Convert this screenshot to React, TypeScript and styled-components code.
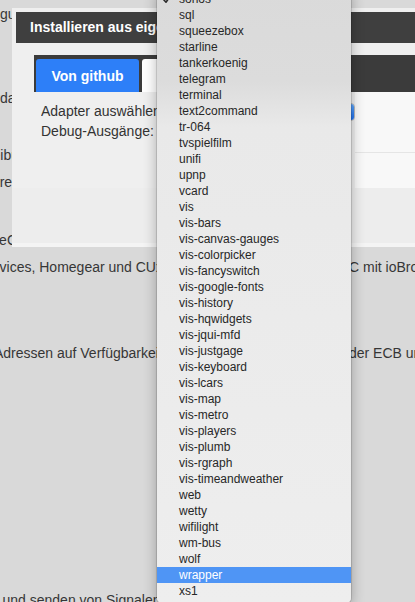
import React from 'react'
import styled, { createGlobalStyle } from 'styled-components'

const GlobalStyle = createGlobalStyle`
  html, body {
    margin: 0;
    padding: 0;
    background: #d9d9d9;
  }
  body {
    font-family: "Liberation Sans", Arial, Helvetica, sans-serif;
  }
`

const Page = styled.div`
  position: relative;
  width: 415px;
  height: 602px;
  overflow: hidden;
  background: #d9d9d9;
  color: #363636;
  font-size: 14px;
`

const Line = styled.div<{ $gap: number }>`
  display: grid;
  grid-template-columns: 157px 194px 1fr;
  height: 16px;
  line-height: 16px;
  margin-top: ${p => p.$gap}px;
  white-space: nowrap;
`

const Cell = styled.div`
  overflow: hidden;
`

const Shifted = styled.span<{ $shift: number }>`
  display: inline-block;
  margin-left: -${p => p.$shift}px;
`

const Dialog = styled.div`
  position: absolute;
  left: 12px;
  top: 8px;
  width: 420px;
  height: 239px;
  background: #efefef;
  display: flex;
  flex-direction: column;
`

const TitleBar = styled.div`
  margin: 4px 0 0 4px;
  height: 31px;
  line-height: 31px;
  padding-left: 14px;
  background: #3f3f3f;
  color: #fff;
  font-size: 14px;
  font-weight: bold;
  white-space: nowrap;
`

const Body = styled.div`
  padding: 12px 0 0 22px;
`

const TabBar = styled.div`
  display: flex;
  align-items: flex-end;
  gap: 3px;
  height: 37px;
  padding-left: 2px;
  background: #3b3b3b;
`

const Tab = styled.div<{ $active?: boolean; $width: number }>`
  width: ${p => p.$width}px;
  height: 31px;
  padding-top: 2px;
  line-height: 31px;
  border-radius: 3px 3px 0 0;
  background: ${p => (p.$active ? '#2d7ff8' : '#ffffff')};
  color: ${p => (p.$active ? '#ffffff' : '#333333')};
  font-size: 14px;
  font-weight: bold;
  text-align: center;
  white-space: nowrap;
`

const TabPanel = styled.div`
  display: flex;
  height: 96px;
`

const Form = styled.div`
  display: grid;
  grid-template-columns: 116px 198px;
  grid-auto-rows: 20px;
  padding: 9px 0 0 7px;
  color: #333;
  font-size: 14px;
`

const Label = styled.div`
  line-height: 20px;
  white-space: nowrap;
  overflow: hidden;
`

const Select = styled.div`
  position: relative;
  height: 16px;
  margin-top: 2px;
  border: 1px solid #b9b9b9;
  border-radius: 4px;
  background: #fff;
  overflow: hidden;
`

const SelectArrow = styled.div`
  position: absolute;
  right: 0;
  top: 0;
  bottom: 0;
  width: 16px;
  background: linear-gradient(#5ea6fb, #1c6ff0);
`

const Checkbox = styled.div`
  width: 12px;
  height: 12px;
  margin-top: 4px;
  border: 1px solid #aaa;
  border-radius: 3px;
  background: #fff;
`

const Aside = styled.div`
  flex: 1;
  display: flex;
  flex-direction: column;
  background: #f8f8f8;
`

const AsideBlock = styled.div<{ $divided?: boolean }>`
  height: ${p => (p.$divided ? 35 : 60)}px;
  border-top: ${p => (p.$divided ? '1px solid #e5e5e5' : 'none')};
`

const Footer = styled.div`
  flex: 1;
  background: #ededed;
  border-bottom: 4px solid #f4f4f4;
`

const Menu = styled.ul`
  position: absolute;
  left: 157px;
  top: -13px;
  width: 194px;
  margin: 0;
  padding: 4px 0;
  list-style: none;
  border-radius: 5px;
  background: linear-gradient(
    #dadada 0px,
    #dcdcdc 95px,
    #e9e9e9 140px,
    #eeeeee 100%
  );
  box-shadow: 0 0 0 1px rgba(0, 0, 0, 0.12), 0 4px 14px rgba(0, 0, 0, 0.3);
  font-size: 12px;
`

const Item = styled.li<{ $selected?: boolean }>`
  position: relative;
  height: 16px;
  line-height: 16px;
  padding-left: 22px;
  background: ${p => (p.$selected ? '#4f95f5' : 'transparent')};
  color: ${p => (p.$selected ? '#ffffff' : '#272727')};
  white-space: nowrap;
`

const Check = styled.svg`
  position: absolute;
  left: 5px;
  top: 3px;
  width: 10px;
  height: 10px;
`

const lines = [
  { gap: 6, left: 'Konfiguration', ls: 32 },
  { gap: 68, left: 'Wetterdaten', ls: 41 },
  { gap: 41, left: 'Beschreibung', ls: 51 },
  { gap: 11, left: 'Sensoren', ls: 40 },
  { gap: 42, left: 'ReGaHSS', ls: 11 },
  {
    gap: 11,
    left: 'BidCos-Services, Homegear und CUxD',
    ls: 72,
    right: 'C mit ioBroker',
    rs: 2,
  },
  {
    gap: 70,
    left: 'IP-Adressen auf Verfügbarkeit',
    ls: 24,
    right: 'der ECB und',
    rs: 2,
  },
  { gap: 231, left: 'Empfangen und senden von Signalen', ls: 73 },
]

const adapters = [
  'sonos', 'sql', 'squeezebox', 'starline', 'tankerkoenig', 'telegram',
  'terminal', 'text2command', 'tr-064', 'tvspielfilm', 'unifi', 'upnp',
  'vcard', 'vis', 'vis-bars', 'vis-canvas-gauges', 'vis-colorpicker',
  'vis-fancyswitch', 'vis-google-fonts', 'vis-history', 'vis-hqwidgets',
  'vis-jqui-mfd', 'vis-justgage', 'vis-keyboard', 'vis-lcars', 'vis-map',
  'vis-metro', 'vis-players', 'vis-plumb', 'vis-rgraph',
  'vis-timeandweather', 'web', 'wetty', 'wifilight', 'wm-bus', 'wolf',
  'wrapper', 'xs1',
]

export default function App() {
  return (
    <Page>
      <GlobalStyle />
      {lines.map((l, i) => (
        <Line key={i} $gap={l.gap}>
          <Cell>
            <Shifted $shift={l.ls}>{l.left}</Shifted>
          </Cell>
          <Cell />
          <Cell>
            {l.right && <Shifted $shift={l.rs ?? 0}>{l.right}</Shifted>}
          </Cell>
        </Line>
      ))}

      <Dialog>
        <TitleBar>Installieren aus eigener URL</TitleBar>
        <Body>
          <TabBar>
            <Tab $active $width={103}>Von github</Tab>
            <Tab $width={150}>Benutzerdefiniert</Tab>
          </TabBar>
          <TabPanel>
            <Form>
              <Label>Adapter auswählen</Label>
              <Select>
                <SelectArrow />
              </Select>
              <Label>Debug-Ausgänge:</Label>
              <Checkbox />
            </Form>
            <Aside>
              <AsideBlock />
              <AsideBlock $divided />
            </Aside>
          </TabPanel>
        </Body>
        <Footer />
      </Dialog>

      <Menu>
        {adapters.map(name => (
          <Item key={name} $selected={name === 'wrapper'}>
            {name === 'sonos' && (
              <Check viewBox="0 0 10 10">
                <polyline
                  points="1.5,5.5 4,8.2 8.8,1.5"
                  fill="none"
                  stroke="#2a2a2a"
                  strokeWidth="1.6"
                  strokeLinecap="round"
                  strokeLinejoin="round"
                />
              </Check>
            )}
            {name}
          </Item>
        ))}
      </Menu>
    </Page>
  )
}
